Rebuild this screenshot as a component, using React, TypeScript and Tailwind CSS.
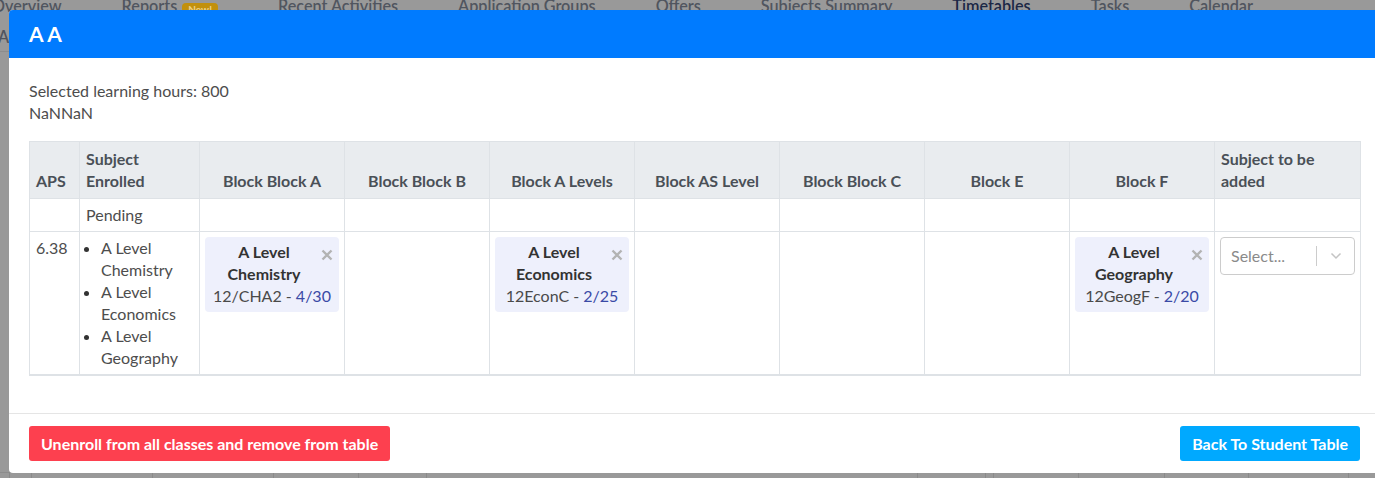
import React from "react";

const tabs = [
  { label: "Overview" },
  { label: "Reports", badge: true },
  { label: "Recent Activities" },
  { label: "Application Groups" },
  { label: "Offers" },
  { label: "Subjects Summary" },
  { label: "Timetables", active: true },
  { label: "Tasks" },
  { label: "Calendar" },
];

const blocks = [
  "Block Block A",
  "Block Block B",
  "Block A Levels",
  "Block AS Level",
  "Block Block C",
  "Block E",
  "Block F",
];

type Enrolment = { title: string; code: string; count: string };

const enrolments: Record<number, Enrolment> = {
  0: { title: "A Level Chemistry", code: "12/CHA2 - ", count: "4/30" },
  2: { title: "A Level Economics", code: "12EconC - ", count: "2/25" },
  6: { title: "A Level Geography", code: "12GeogF - ", count: "2/20" },
};

function CloseIcon() {
  return (
    <svg width="12" height="12" viewBox="0 0 12 12" className="shrink-0">
      <path d="M1.5 1.5 L10.5 10.5 M10.5 1.5 L1.5 10.5" stroke="#b3b3b3" strokeWidth="2.4" strokeLinecap="butt" />
    </svg>
  );
}

function ClassCard({ e }: { e: Enrolment }) {
  return (
    <div className="rounded-[4px] bg-[#eef0fc] px-[6px] pt-[4px] pb-[5px]">
      <div className="flex items-start">
        <div className="flex-1 text-center font-bold text-[#333333]">{e.title}</div>
        <div className="flex w-[16px] justify-end pt-[8px]">
          <CloseIcon />
        </div>
      </div>
      <div className="-mx-[4px] whitespace-nowrap text-center text-[#4a4a4a]">
        {e.code}
        <span className="text-[#3a4aa6]">{e.count}</span>
      </div>
    </div>
  );
}

function SelectBox() {
  return (
    <div className="flex h-[38px] items-center rounded-[4px] border border-[#cccccc] bg-white">
      <div className="flex-1 pl-[10px] text-[#8a8a8a]">Select...</div>
      <div className="h-[20px] w-px bg-[#cccccc]" />
      <div className="flex w-[37px] justify-center">
        <svg width="12" height="8" viewBox="0 0 12 8">
          <path d="M1.5 1.5 L6 6 L10.5 1.5" fill="none" stroke="#c4c4c4" strokeWidth="1.5" />
        </svg>
      </div>
    </div>
  );
}

export default function App() {
  return (
    <div className="relative h-[478px] w-full overflow-hidden bg-[#999999] font-['Lato',sans-serif] text-[16px] leading-[22px]">
      {/* page behind the dialog */}
      <div className="flex h-full flex-col">
        <div className="-ml-[8px] -mt-[5px] flex gap-[60px] whitespace-nowrap text-[16.2px] font-semibold text-[#50555f]">
          {tabs.map((t) => (
            <div key={t.label} className={`flex items-start ${t.active ? "text-[#1b2746]" : ""}`}>
              <span>{t.label}</span>
              {t.badge && (
                <span className="ml-[5px] mt-[8px] rounded-[4px] bg-[#c2900c] px-[6px] text-[10px] font-bold leading-[12px] text-[#ecd08a]">
                  New!
                </span>
              )}
            </div>
          ))}
        </div>
        <div className="-ml-[2px] mt-[9px] text-[16.2px] font-semibold text-[#50555f]">All</div>
        <div className="mt-[3px] h-px w-[20px] bg-[#8c8c8c]" />
        <div className="mt-auto flex h-[6px] border-t border-[#8c8c8c]">
          {[10, 22, 121, 121, 85, 68, 491, 68, 8, 85, 86, 84, 100].map((w, i) => (
            <div key={i} style={{ width: w }} className="border-r border-[#8a8a8a]" />
          ))}
        </div>
      </div>

      {/* dialog */}
      <div className="absolute left-[9px] top-[10px] w-[1371px] overflow-hidden rounded-[4px] bg-white">
        <div className="flex h-[48px] items-center bg-[#007bff] px-[20px] text-[21px] font-bold text-white">
          A A
        </div>

        <div className="px-[20px] pt-[22px] pb-[37px] text-[#4d4d4d]">
          <div>Selected learning hours: 800</div>
          <div>NaNNaN</div>

          <table className="mt-[17px] w-[1331px] table-fixed border-collapse">
            <colgroup>
              <col className="w-[50px]" />
              <col className="w-[120px]" />
              {blocks.map((b) => (
                <col key={b} className="w-[145px]" />
              ))}
              <col className="w-[146px]" />
            </colgroup>
            <thead>
              <tr className="bg-[#e9ecef] font-bold text-[#4a5057]">
                <th className="h-[55px] border border-[#dee2e6] p-[6px] text-left align-bottom">APS</th>
                <th className="border border-[#dee2e6] p-[6px] text-left align-bottom">Subject Enrolled</th>
                {blocks.map((b) => (
                  <th key={b} className="border border-[#dee2e6] p-[6px] text-center align-bottom">
                    {b}
                  </th>
                ))}
                <th className="border border-[#dee2e6] p-[6px] text-left align-bottom">Subject to be added</th>
              </tr>
            </thead>
            <tbody>
              <tr>
                <td className="h-[33px] border border-[#dee2e6] px-[6px] py-[5px]" />
                <td className="border border-[#dee2e6] px-[6px] py-[5px]">Pending</td>
                {blocks.map((b) => (
                  <td key={b} className="border border-[#dee2e6]" />
                ))}
                <td className="border border-[#dee2e6]" />
              </tr>
              <tr>
                <td className="border border-b-2 border-[#dee2e6] px-[6px] py-[5px] align-top">6.38</td>
                <td className="border border-b-2 border-[#dee2e6] px-[5px] py-[5px] align-top">
                  <ul className="list-disc pl-[16px] marker:text-[#333]">
                    <li>A Level Chemistry</li>
                    <li>A Level Economics</li>
                    <li>A Level Geography</li>
                  </ul>
                </td>
                {blocks.map((b, i) => (
                  <td key={b} className="border border-b-2 border-[#dee2e6] px-[5px] py-[5px] align-top">
                    {enrolments[i] && <ClassCard e={enrolments[i]} />}
                  </td>
                ))}
                <td className="border border-b-2 border-[#dee2e6] px-[5px] py-[5px] align-top">
                  <SelectBox />
                </td>
              </tr>
            </tbody>
          </table>
        </div>

        <div className="flex items-center justify-between border-t border-[#e5e5e5] px-[20px] pt-[12px] pb-[12px]">
          <button className="h-[35px] rounded-[3px] bg-[#fd404f] px-[12px] font-bold text-white">
            Unenroll from all classes and remove from table
          </button>
          <button className="h-[35px] rounded-[3px] bg-[#00a9ff] px-[12px] font-bold text-white">
            Back To Student Table
          </button>
        </div>
      </div>
    </div>
  );
}
